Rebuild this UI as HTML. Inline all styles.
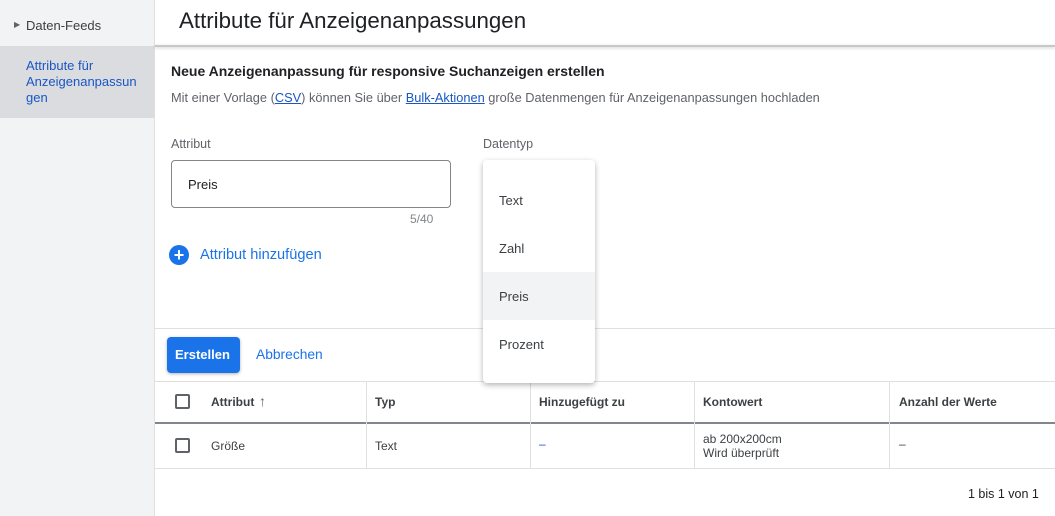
<!DOCTYPE html>
<html><head><meta charset="utf-8"><style>
*{box-sizing:border-box;margin:0;padding:0}
body{width:1055px;height:516px;overflow:hidden;font-family:"Liberation Sans",sans-serif;background:#fff;position:relative;color:#202124}
.abs{position:absolute}
.side{left:0;top:0;width:155px;height:516px;background:#f1f3f4;border-right:1px solid #e0e0e0}
.sel{left:0;top:46px;width:155px;height:72px;background:#dadce0}
.t{position:absolute;white-space:nowrap}
.line{position:absolute;background:#e0e0e0}
.cb{position:absolute;width:15px;height:15px;border:2px solid #5f6368;border-radius:2px}
.menu{left:483px;top:160px;width:112px;height:223px;background:#fff;border-radius:4px;box-shadow:0 2px 6px rgba(0,0,0,.3)}
.mi{position:absolute;left:16px;font-size:13px;color:#3c4043}
.th{font-size:12px;font-weight:bold;color:#3c4043}
.td{font-size:12px;color:#3c4043}
</style></head><body>
<div class="abs side"></div>
<div class="abs sel"></div>
<div class="t" style="left:14px;top:20px;font-size:8px;color:#5f6368">▶</div>
<div class="t" style="left:26px;top:18px;font-size:13px;color:#3c4043">Daten-Feeds</div>
<div class="t" style="left:26px;top:58px;font-size:13px;line-height:16px;color:#1a56c4">Attribute für<br>Anzeigenanpassun<br>gen</div>
<div class="t" style="left:179px;top:8px;font-size:22.3px;color:#202124">Attribute für Anzeigenanpassungen</div>
<div class="line" style="left:155px;top:45px;width:900px;height:2px;background:#c8c8c8;box-shadow:0 1px 3px rgba(0,0,0,.2)"></div>
<div class="t" style="left:171px;top:63px;font-size:14px;font-weight:bold;color:#202124">Neue Anzeigenanpassung für responsive Suchanzeigen erstellen</div>
<div class="t" style="left:171px;top:90px;font-size:12.8px;color:#5f6368">Mit einer Vorlage (<u style="color:#1a56c4">CSV</u>) können Sie über <u style="color:#1a56c4">Bulk-Aktionen</u> große Datenmengen für Anzeigenanpassungen hochladen</div>
<div class="t" style="left:171px;top:137px;font-size:12.5px;color:#5f6368">Attribut</div>
<div class="t" style="left:483px;top:137px;font-size:12.5px;color:#5f6368">Datentyp</div>
<div class="abs" style="left:171px;top:160px;width:280px;height:48px;border:1px solid #80868b;border-radius:4px"></div>
<div class="t" style="left:188px;top:177px;font-size:13px">Preis</div>
<div class="t" style="left:410px;top:212px;font-size:12px;color:#80868b">5/40</div>
<div class="abs" style="left:169px;top:245px;width:20px;height:20px;border-radius:50%;background:#1a73e8;color:#fff;font-size:18px;line-height:20px;text-align:center;font-weight:bold">+</div>
<div class="t" style="left:200px;top:247px;font-size:14.6px;color:#1a73e8">Attribut hinzufügen</div>
<div class="line" style="left:155px;top:328px;width:900px;height:1px"></div>
<div class="abs" style="left:167px;top:337px;width:73px;height:36px;background:#1a73e8;border-radius:4px;box-shadow:0 1px 3px rgba(0,0,0,.3)"></div>
<div class="t" style="left:175px;top:347px;font-size:13px;font-weight:bold;color:#fff">Erstellen</div>
<div class="t" style="left:256px;top:347px;font-size:13.8px;color:#1a73e8">Abbrechen</div>
<div class="line" style="left:155px;top:381px;width:900px;height:1px"></div>
<div class="line" style="left:155px;top:422px;width:900px;height:2px;background:#80868b"></div>
<div class="line" style="left:155px;top:468px;width:900px;height:1px"></div>
<div class="line" style="left:366px;top:382px;width:1px;height:86px"></div>
<div class="line" style="left:530px;top:382px;width:1px;height:86px"></div>
<div class="line" style="left:694px;top:382px;width:1px;height:86px"></div>
<div class="line" style="left:889px;top:382px;width:1px;height:86px"></div>
<div class="cb" style="left:175px;top:394px"></div>
<div class="t th" style="left:211px;top:395px">Attribut</div>
<div class="t" style="left:259px;top:393px;font-size:14px;color:#5f6368">↑</div>
<div class="t th" style="left:375px;top:395px">Typ</div>
<div class="t th" style="left:539px;top:395px">Hinzugefügt zu</div>
<div class="t th" style="left:703px;top:395px">Kontowert</div>
<div class="t th" style="left:899px;top:395px">Anzahl der Werte</div>
<div class="cb" style="left:175px;top:438px"></div>
<div class="t td" style="left:211px;top:439px">Größe</div>
<div class="t td" style="left:375px;top:439px">Text</div>
<div class="t td" style="left:539px;top:437px;color:#1a56c4">–</div>
<div class="t td" style="left:703px;top:432px;line-height:14px">ab 200x200cm<br>Wird überprüft</div>
<div class="t td" style="left:899px;top:437px">–</div>
<div class="t" style="left:968px;top:487px;font-size:12.5px;color:#202124">1 bis 1 von 1</div>
<div class="abs menu">
<div class="abs" style="left:0;top:112px;width:112px;height:48px;background:#f1f3f4"></div>
<div class="mi" style="top:33px">Text</div>
<div class="mi" style="top:81px">Zahl</div>
<div class="mi" style="top:129px">Preis</div>
<div class="mi" style="top:177px">Prozent</div>
</div>
</body></html>
